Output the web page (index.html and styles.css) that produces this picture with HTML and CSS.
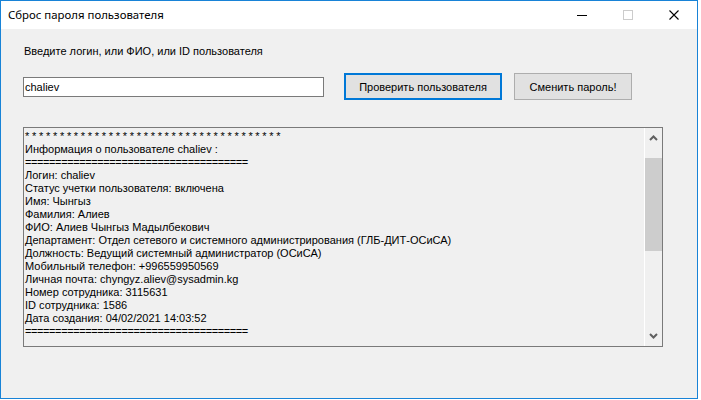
FILE: index.html
```html
<!DOCTYPE html>
<html lang="ru">
<head>
<meta charset="utf-8">
<title>Сброс пароля пользователя</title>
<link rel="stylesheet" href="styles.css">
</head>
<body>
<div class="window">
  <div class="titlebar">
    <span class="title">Сброс пароля пользователя</span>
    <div class="caption-buttons">
      <span class="cap"><svg width="10" height="10" viewBox="0 0 10 10"><rect x="0" y="5" width="10" height="1" fill="#000"/></svg></span>
      <span class="cap"><svg width="10" height="10" viewBox="0 0 10 10"><rect x="0.5" y="0.5" width="9" height="9" fill="none" stroke="#cccccc" stroke-width="1"/></svg></span>
      <span class="cap"><svg width="10" height="10" viewBox="0 0 10 10"><path d="M0.5 0.5 L9.5 9.5 M9.5 0.5 L0.5 9.5" stroke="#000" stroke-width="1.1" fill="none"/></svg></span>
    </div>
  </div>
  <div class="client">
    <div class="label">Введите логин, или ФИО, или ID пользователя</div>
    <div class="row">
      <div class="textbox">chaliev</div>
      <div class="btn btn-primary">Проверить пользователя</div>
      <div class="btn btn-second">Сменить пароль!</div>
    </div>
    <div class="output">
      <div class="output-text"><div class="stars">*************************************</div><div>Информация о пользователе chaliev :</div><div class="eq">=====================================</div><div>Логин: chaliev</div><div>Статус учетки пользователя: включена</div><div>Имя: Чынгыз</div><div>Фамилия: Алиев</div><div>ФИО: Алиев Чынгыз Мадылбекович</div><div>Департамент: Отдел сетевого и системного администрирования (ГЛБ-ДИТ-ОСиСА)</div><div>Должность: Ведущий системный администратор (ОСиСА)</div><div>Мобильный телефон: +996559950569</div><div>Личная почта: chyngyz.aliev@sysadmin.kg</div><div>Номер сотрудника: 3115631</div><div>ID сотрудника: 1586</div><div>Дата создания: 04/02/2021 14:03:52</div><div class="eq">=====================================</div></div>
      <div class="scrollbar">
        <div class="sb-btn sb-up"><svg width="9" height="6" viewBox="0 0 9 6"><path d="M1 5 L4.5 1.5 L8 5" stroke="#606060" stroke-width="2" fill="none"/></svg></div>
        <div class="sb-track"><div class="sb-thumb"></div></div>
        <div class="sb-btn sb-down"><svg width="9" height="6" viewBox="0 0 9 6"><path d="M1 1 L4.5 4.5 L8 1" stroke="#606060" stroke-width="2" fill="none"/></svg></div>
      </div>
    </div>
  </div>
</div>
</body>
</html>
```
FILE: styles.css
```css
body {
  margin: 0;
  background: #ffffff;
  font-family: "Liberation Sans", Arial, sans-serif;
  color: #000;
}

.window {
  width: 698px;
  height: 399px;
  box-sizing: border-box;
  border: 1px solid #1883d7;
  background: #f0f0f0;
  display: flex;
  flex-direction: column;
}

.titlebar {
  height: 28px;
  flex-shrink: 0;
  background: #ffffff;
  display: flex;
  align-items: center;
}

.title {
  padding-left: 7px;
  font-family: "Noto Sans", "Liberation Sans", sans-serif;
  font-size: 11.4px;
  line-height: 16px;
  flex: 1;
}

.caption-buttons {
  display: flex;
  height: 28px;
}

.cap {
  width: 46px;
  height: 28px;
  display: flex;
  align-items: center;
  justify-content: center;
}

.cap svg {
  display: block;
}

.client {
  padding: 16px 0 0 22px;
  font-size: 11px;
}

.label {
  padding-left: 1px;
  line-height: 13px;
  height: 13px;
}

.row {
  display: flex;
  align-items: center;
  height: 27px;
  margin-top: 15px;
}

.textbox {
  width: 301px;
  height: 20px;
  box-sizing: border-box;
  border: 1px solid #7a7a7a;
  background: #ffffff;
  padding-left: 1px;
  line-height: 18px;
}

.btn {
  height: 27px;
  box-sizing: border-box;
  border: 1px solid #adadad;
  background: #e1e1e1;
  display: flex;
  align-items: center;
  justify-content: center;
}

.btn-primary {
  width: 158px;
  margin-left: 20px;
  border: 2px solid #0078d7;
}

.btn-second {
  width: 118px;
  margin-left: 12px;
}

.output {
  margin-top: 27px;
  width: 640px;
  height: 220px;
  box-sizing: border-box;
  border: 1px solid #7a7a7a;
  display: flex;
}

.output-text {
  flex: 1;
  padding: 2px 0 0 1px;
  line-height: 13px;
  white-space: pre;
  overflow: hidden;
}

.stars {
  letter-spacing: 2.7px;
}

.eq {
  letter-spacing: -0.4px;
}

.scrollbar {
  width: 17px;
  border-left: 1px solid #ffffff;
  display: flex;
  flex-direction: column;
}

.sb-btn {
  height: 20px;
  display: flex;
  align-items: center;
  justify-content: center;
}

.sb-btn svg {
  display: block;
}

.sb-track {
  flex: 1;
  padding-top: 10px;
}

.sb-thumb {
  height: 93px;
  background: #cdcdcd;
}
```
